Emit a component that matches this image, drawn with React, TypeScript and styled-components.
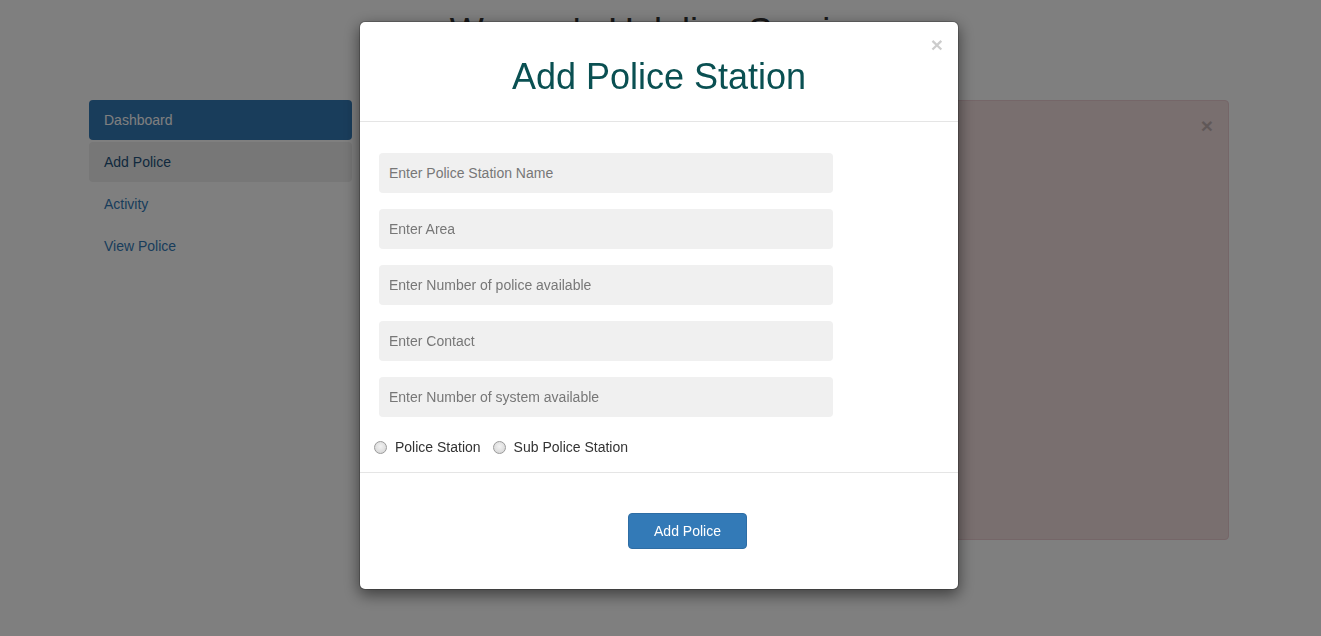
import React from "react";
import styled, { createGlobalStyle } from "styled-components";

const GlobalStyle = createGlobalStyle`
  html, body { margin: 0; padding: 0; background: #fff; }
  body {
    font-family: "Liberation Sans", Arial, Helvetica, sans-serif;
    font-size: 14px;
    line-height: 1.42857;
    color: #333;
  }
  * { box-sizing: border-box; }
`;

const Page = styled.div`
  width: 1321px;
  height: 636px;
  padding-left: 89px;
  overflow: hidden;
`;

const Container = styled.div`
  width: 1140px;
`;

const PageTitle = styled.h1`
  margin: 12px 0 48px;
  font-size: 36px;
  line-height: 40px;
  font-weight: 500;
  text-align: center;
  color: #333;
`;

const Row = styled.div`
  display: grid;
  grid-template-columns: 262.5px 1fr;
  column-gap: 30px;
  align-items: start;
`;

const Pills = styled.ul`
  list-style: none;
  margin: 0;
  padding: 0;
  display: flex;
  flex-direction: column;
  gap: 2px;
`;

const Pill = styled.li<{ $state?: "active" | "hover" }>`
  height: 40px;
  padding: 10px 15px;
  line-height: 20px;
  border-radius: 4px;
  background: ${(p) =>
    p.$state === "active" ? "#337ab7" : p.$state === "hover" ? "#eeeeee" : "transparent"};
  color: ${(p) =>
    p.$state === "active" ? "#fff" : p.$state === "hover" ? "#23527c" : "#337ab7"};
`;

const Alert = styled.div`
  position: relative;
  height: 440px;
  background: #f2dede;
  border: 1px solid #ebccd1;
  border-radius: 4px;
`;

const AlertClose = styled.span`
  position: absolute;
  top: 14px;
  right: 15px;
  font-size: 21px;
  font-weight: bold;
  line-height: 1;
  color: #000;
  opacity: 0.2;
`;

const Backdrop = styled.div`
  position: fixed;
  inset: 0;
  background: rgba(0, 0, 0, 0.5);
  display: flex;
  justify-content: flex-start;
  align-items: flex-start;
  padding: 21px 0 0 359px;
`;

const Modal = styled.div`
  position: relative;
  width: 600px;
  background: #fff;
  border: 1px solid rgba(0, 0, 0, 0.2);
  border-radius: 6px;
  box-shadow: 0 5px 15px rgba(0, 0, 0, 0.5);
  background-clip: padding-box;
`;

const ModalHeader = styled.div`
  position: relative;
  padding: 15px;
  border-bottom: 1px solid #e5e5e5;
`;

const ModalClose = styled.span`
  position: absolute;
  top: 12px;
  right: 15px;
  font-size: 21px;
  font-weight: bold;
  line-height: 1;
  color: #000;
  opacity: 0.2;
`;

const ModalTitle = styled.h1`
  margin: 20px 0 9px;
  font-size: 36px;
  line-height: 40px;
  font-weight: 500;
  text-align: center;
  color: #0a5052;
`;

const ModalBody = styled.div`
  padding: 31px 15px 14px;
`;

const Fields = styled.div`
  display: flex;
  flex-direction: column;
  gap: 16px;
  padding-left: 4px;
`;

const Field = styled.input`
  width: 454px;
  height: 40px;
  border: none;
  border-radius: 4px;
  background: #f0f0f0;
  padding: 0 10px;
  font-family: inherit;
  font-size: 14px;
  color: #555;
  outline: none;
  &::placeholder { color: #777; }
`;

const RadioRow = styled.div`
  display: flex;
  align-items: center;
  margin-top: 21px;
  height: 20px;
`;

const RadioLabel = styled.label`
  display: flex;
  align-items: center;
  gap: 8px;
  margin-right: 13px;
  color: #333;
  font-size: 14px;
`;

const Radio = styled.input`
  appearance: none;
  margin: 0 0 0 -1px;
  width: 13px;
  height: 13px;
  border-radius: 50%;
  border: 1px solid #9a9a9a;
  background: radial-gradient(circle at 50% 40%, #f2f2f2 0%, #d8d8d8 80%);
`;

const ModalFooter = styled.div`
  border-top: 1px solid #e5e5e5;
  padding: 40px 0 40px 268px;
`;

const PrimaryButton = styled.button`
  width: 119px;
  height: 36px;
  border: 1px solid #2e6da4;
  border-radius: 4px;
  background: #337ab7;
  color: #fff;
  font-family: inherit;
  font-size: 14px;
  line-height: 20px;
  padding: 0;
`;

const placeholders = [
  "Enter Police Station Name",
  "Enter Area",
  "Enter Number of police available",
  "Enter Contact",
  "Enter Number of system available",
];

export default function App() {
  return (
    <>
      <GlobalStyle />
      <Page>
        <Container>
          <PageTitle>Women's Helpline Service</PageTitle>
          <Row>
            <Pills>
              <Pill $state="active">Dashboard</Pill>
              <Pill $state="hover">Add Police</Pill>
              <Pill>Activity</Pill>
              <Pill>View Police</Pill>
            </Pills>
            <Alert>
              <AlertClose>×</AlertClose>
            </Alert>
          </Row>
        </Container>
      </Page>
      <Backdrop>
        <Modal>
          <ModalHeader>
            <ModalClose>×</ModalClose>
            <ModalTitle>Add Police Station</ModalTitle>
          </ModalHeader>
          <ModalBody>
            <Fields>
              {placeholders.map((p) => (
                <Field key={p} placeholder={p} />
              ))}
            </Fields>
            <RadioRow>
              <RadioLabel>
                <Radio type="radio" name="kind" />
                Police Station
              </RadioLabel>
              <RadioLabel>
                <Radio type="radio" name="kind" />
                Sub Police Station
              </RadioLabel>
            </RadioRow>
          </ModalBody>
          <ModalFooter>
            <PrimaryButton>Add Police</PrimaryButton>
          </ModalFooter>
        </Modal>
      </Backdrop>
    </>
  );
}
